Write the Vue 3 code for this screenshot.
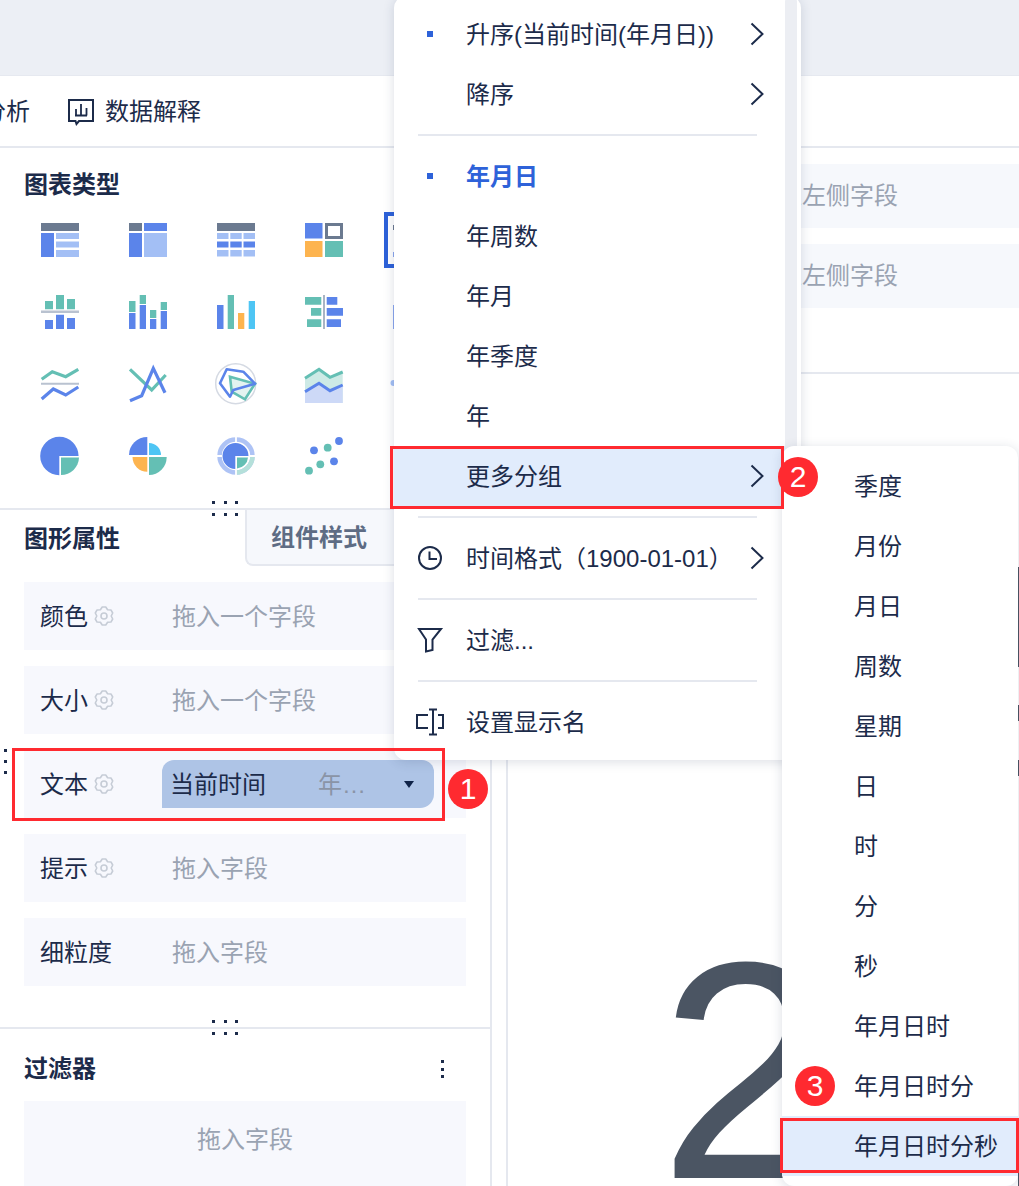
<script setup>
const mainMenu = [
  { type: 'item', label: '升序(当前时间(年月日))', bullet: true, arrow: true },
  { type: 'item', label: '降序', arrow: true },
  { type: 'line' },
  { type: 'item', label: '年月日', bullet: true, active: true },
  { type: 'item', label: '年周数' },
  { type: 'item', label: '年月' },
  { type: 'item', label: '年季度' },
  { type: 'item', label: '年' },
  { type: 'item', label: '更多分组', arrow: true, hover: true },
  { type: 'line' },
  { type: 'item', label: '时间格式（1900-01-01）', icon: 'clock', arrow: true },
  { type: 'line' },
  { type: 'item', label: '过滤...', icon: 'filter' },
  { type: 'line' },
  { type: 'item', label: '设置显示名', icon: 'rename' }
]
const subMenu = ['季度', '月份', '月日', '周数', '星期', '日', '时', '分', '秒', '年月日时', '年月日时分', '年月日时分秒']
const attrRows = [
  { label: '颜色', gear: true, hint: '拖入一个字段' },
  { label: '大小', gear: true, hint: '拖入一个字段' },
  { label: '文本', gear: true, pill: true },
  { label: '提示', gear: true, hint: '拖入字段' },
  { label: '细粒度', hint: '拖入字段' }
]
// bits of the big value that stick out right of the submenu
const peeks = [
  { top: 567, height: 100 },
  { top: 705, height: 16 },
  { top: 760, height: 16 },
  { top: 1172, height: 14 }
]

// six lobes with shallow notches between them
function gearPath() {
  const pts = []
  for (let i = 0; i < 6; i++) {
    const a = -90 + i * 60
    for (const [d, r] of [[-11, 9.2], [11, 9.2], [30, 7.2]]) {
      const t = ((a + d) * Math.PI) / 180
      pts.push(`${(10 + r * Math.cos(t)).toFixed(2)} ${(10 + r * Math.sin(t)).toFixed(2)}`)
    }
  }
  return 'M' + pts.join('L') + 'Z'
}
const gear = gearPath()
</script>

<template>
  <div class="page">
    <div class="topbar"></div>
    <div class="toolbar">
      <span class="tool-cut">分析</span>
      <svg class="tool-icon" width="28" height="28" viewBox="0 0 28 28" fill="none" stroke="#1c2b4a" stroke-width="2">
        <path d="M2 2h24v21H12l-2.500 3-1-3H2z" />
        <path d="M8 17.500h12M9 11v6.500M14 6v11.500M19.500 10v7.500" stroke-width="1.800" />
      </svg>
      <span class="tool-text">数据解释</span>
    </div>

    <div class="body">
      <div class="left">
        <section class="charts">
          <h3 class="title">图表类型</h3>
          <div class="chart-grid">
            <svg viewBox="0 0 38 34"><rect width="38" height="8" fill="#6b7a90" /><rect y="10" width="13" height="24" fill="#5b84ea" /><rect x="15" y="10" width="23" height="6" fill="#a3bff5" /><rect x="15" y="18.500" width="23" height="6" fill="#a3bff5" /><rect x="15" y="27" width="23" height="7" fill="#a3bff5" /></svg>
            <svg viewBox="0 0 38 34"><rect width="13" height="8" fill="#6b7a90" /><rect x="15" width="23" height="8" fill="#5b84ea" /><rect y="10" width="13" height="24" fill="#5b84ea" /><rect x="15" y="10" width="23" height="24" fill="#a3bff5" /></svg>
            <svg viewBox="0 0 38 34"><rect width="38" height="8" fill="#6b7a90" /><path fill="#a3bff5" d="M0 10h11.500v6H0zM13.300 10h11.400v6H13.300zM26.500 10H38v6H26.500zM0 27h11.500v6.500H0zM13.300 27h11.400v6.500H13.300zM26.500 27H38v6.500H26.500z" /><path fill="#5b84ea" d="M0 18.500h11.500v6H0zM13.300 18.500h11.400v6H13.300zM26.500 18.500H38v6H26.500z" /></svg>
            <svg viewBox="0 0 38 34"><rect width="17.500" height="15.500" fill="#5b84ea" /><rect x="21.500" y="1.500" width="15" height="13" fill="none" stroke="#6b7a90" stroke-width="3" /><rect y="18" width="17.500" height="16" fill="#fdb44f" /><rect x="20" y="18" width="18" height="16" fill="#64bfb4" /></svg>
            <svg viewBox="0 0 38 34"><rect y="2" width="38" height="5" fill="#6b7a90" /><rect y="29" width="38" height="5" fill="#8ba7ee" /><rect x="-7" y="-9" width="60" height="52" fill="none" stroke="#2e62d9" stroke-width="4" /></svg>

            <svg viewBox="0 0 38 34"><rect y="15.500" width="38" height="2.500" fill="#b9c2d0" /><path fill="#64bfb4" d="M4 6h8v8.300H4zM15 0h8v14.300h-8zM26 4h8v10.300h-8z" /><path fill="#5b84ea" d="M4 25h8v9H4zM15 19.700h8V34h-8zM26 23h8v11h-8z" /></svg>
            <svg viewBox="0 0 38 34"><path fill="#5b84ea" d="M0 18h6.500v16H0zM10.700 10H17v24h-6.300zM21 24h6.300v10H21zM31.700 16H38v18h-6.300z" /><path fill="#64bfb4" d="M0 6h6.500v11H0zM10.700 0H17v9h-6.300zM21 15h6.300v8H21zM31.700 7H38v8h-6.300z" /></svg>
            <svg viewBox="0 0 38 34"><rect y="10" width="6.500" height="24" fill="#5b84ea" /><rect x="10.700" width="6.300" height="34" fill="#64bfb4" /><rect x="21" y="18" width="6.300" height="16" fill="#fdb44f" /><rect x="31.700" y="6" width="6.300" height="28" fill="#4ec5f4" /></svg>
            <svg viewBox="0 0 38 34"><rect x="18" width="2" height="34" fill="#a9b4c4" /><path fill="#64bfb4" d="M0 2h16.300v7.700H0zM6 13h10.300v7.700H6zM2 24.300h14.300V32H2z" /><path fill="#5b84ea" d="M21.700 2h10.600v7.700H21.700zM21.700 13H38v7.700H21.700zM21.700 24.300H36V32H21.700z" /></svg>
            <svg viewBox="0 0 38 34"><rect y="10" width="38" height="24" fill="#8ba7ee" /></svg>

            <svg viewBox="0 0 38 34" fill="none" stroke-width="3.200"><path d="M.7 12.300l10.600-7.600 13.400 5 12.600-7.400" stroke="#64bfb4" /><path d="M0 16.700h38" stroke="#b9c2d0" stroke-width="2" /><path d="M.7 32l11.600-10 12.400 6 12.600-8" stroke="#5b84ea" /></svg>
            <svg viewBox="0 0 38 34" fill="none" stroke-width="3.200"><path d="M1 2.300L22.700 23 36.700 8" stroke="#64bfb4" /><path d="M1 33.700l11.700-5L24.300 1.300 36 25.700" stroke="#5b84ea" /></svg>
            <svg viewBox="0 0 38 34" fill="none"><circle cx="18.700" cy="16.700" r="20" stroke="#d5dae3" stroke-width="1.500" /><path d="M13 9.700l25 7-10 15.600-13.300-7.600z" fill="#e3f3f0" stroke="#64bfb4" stroke-width="2.600" /><path d="M9.700 2.300l16.600 2.400L38 16.700 16.300 23 13 29.700 3 16.300z" stroke="#5b84ea" stroke-width="2.600" stroke-linejoin="round" /></svg>
            <svg viewBox="0 0 38 34"><path fill="#cdeae6" d="M0 11.300L14 2.300l11 8 12.700-5.300V36H0z" /><path fill="#cdd9f7" d="M0 24.700l14-8.400 11 7.400L37.700 18V36H0z" /><path fill="none" stroke="#64bfb4" stroke-width="3" d="M0 11.300L14 2.300l11 8 12.700-5.300" /><path fill="none" stroke="#5b84ea" stroke-width="3" d="M0 24.700l14-8.400 11 7.400L37.700 18" /></svg>
            <svg viewBox="0 0 38 34"><circle cx="0.500" cy="16" r="3" fill="#a3bff5" /></svg>

            <svg viewBox="0 0 38 34"><path fill="#5b84ea" d="M18.300 17H37.600A19.200 19.200 0 1 0 18.300 36.200Z" /><path fill="#64bfb4" d="M20 18.500H38A18 18 0 0 1 20 36Z" /></svg>
            <svg viewBox="0 0 38 34"><path fill="#5b84ea" d="M18.300 16V-2A18.300 18 0 0 0 0 16Z" /><path fill="#4ec5f4" d="M20 16V4A12 12 0 0 1 32 16Z" /><path fill="#fdb44f" d="M18.300 18H3.500A14.800 14.800 0 0 0 18.300 32.700Z" /><path fill="#64bfb4" d="M20 18H37.700A17.700 18 0 0 1 20 36Z" /></svg>
            <svg viewBox="0 0 38 34"><circle cx="19" cy="17" r="16.500" fill="none" stroke="#aec3f5" stroke-width="4.500" /><path d="M19 33.500A16.500 16.500 0 0 0 35.500 17" fill="none" stroke="#b5e0da" stroke-width="4.500" /><path d="M19-3v40M-1 17h40" stroke="#fff" stroke-width="1.800" /><path fill="#5b84ea" d="M18.300 17H31.500A13 13 0 1 0 18.300 30Z" /><path fill="#64bfb4" d="M20 18.500H31A12 12 0 0 1 20 29.500Z" /></svg>
            <svg viewBox="0 0 38 34"><circle cx="34" cy="2" r="3.900" fill="#5b84ea" /><circle cx="22.700" cy="8.700" r="3.900" fill="#64bfb4" /><circle cx="9" cy="11.300" r="3.900" fill="#5b84ea" /><circle cx="29" cy="22.300" r="3.900" fill="#5b84ea" /><circle cx="15.300" cy="25.300" r="3.900" fill="#64bfb4" /><circle cx="4" cy="31.700" r="3.900" fill="#64bfb4" /></svg>
          </div>
        </section>

        <div class="splitter"><div class="dots"><i v-for="n in 6" :key="n"></i></div></div>

        <div class="tabs">
          <div class="tab"><span class="title">图形属性</span></div>
          <div class="tab tab-off"><span>组件样式</span></div>
        </div>

        <div class="attr-rows">
          <div v-for="row in attrRows" :key="row.label" class="attr-row">
            <div class="attr-label">
              <span class="txt">{{ row.label }}</span>
              <svg v-if="row.gear" class="gear" width="20" height="20" viewBox="0 0 20 20" fill="none" stroke="#c6ccd6" stroke-width="1.600" stroke-linejoin="round">
                <path :d="gear" /><circle cx="10" cy="10" r="3" />
              </svg>
            </div>
            <div v-if="row.pill" class="pill">
              <span class="pill-name txt">当前时间</span>
              <span class="pill-sub txt">年…</span>
              <i class="caret"></i>
            </div>
            <span v-else class="hint txt">{{ row.hint }}</span>
          </div>
        </div>

        <div class="splitter second"><div class="dots"><i v-for="n in 6" :key="n"></i></div></div>

        <div class="filter-head">
          <h3 class="title">过滤器</h3>
          <div class="more"><i></i><i></i><i></i></div>
        </div>
        <div class="filter-drop">拖入字段</div>
      </div>

      <div class="gutter"></div>

      <div class="right">
        <div class="field">拖入左侧字段</div>
        <div class="field">拖入左侧字段</div>
        <div class="right-line"></div>
        <div class="big-value">2</div>
      </div>
    </div>

    <div
      v-for="p in peeks"
      :key="p.top"
      class="peek"
      :style="{ top: p.top + 'px', height: p.height + 'px' }"
    ></div>

    <!-- context menu -->
    <div class="menu">
      <div class="menu-list">
        <template v-for="(m, i) in mainMenu" :key="i">
          <div v-if="m.type === 'line'" class="menu-line"></div>
          <div v-else class="menu-item" :class="{ active: m.active, hover: m.hover }">
            <div class="lead">
              <i v-if="m.bullet" class="bullet"></i>
              <svg v-if="m.icon === 'clock'" width="28" height="28" viewBox="0 0 28 28" fill="none" stroke="#1c2b4a" stroke-width="2">
                <circle cx="14" cy="14" r="11" /><path d="M13.500 7.500V15H21" />
              </svg>
              <svg v-if="m.icon === 'filter'" width="28" height="28" viewBox="0 0 28 28" fill="none" stroke="#1c2b4a" stroke-width="2">
                <path d="M3 3h22l-8.500 10.500V24L10 25.500V13.500z" />
              </svg>
              <svg v-if="m.icon === 'rename'" width="30" height="30" viewBox="0 0 30 30" fill="none" stroke="#1c2b4a" stroke-width="2">
                <path d="M13 8H2v13h11M18 2v26M14 2.500h8M14 27.500h8M23 8h5v13h-5" />
              </svg>
            </div>
            <span class="txt">{{ m.label }}</span>
            <svg v-if="m.arrow" class="chev" width="14" height="24" viewBox="0 0 14 24" fill="none" stroke="#1c2b4a" stroke-width="2"><path d="M1.500 1.500L12.500 12 1.500 22.500" /></svg>
          </div>
        </template>
      </div>
      <div class="menu-track"></div>
    </div>

    <div class="submenu">
      <div v-for="(s, i) in subMenu" :key="s" class="sub-item" :class="{ hover: i === subMenu.length - 1 }">{{ s }}</div>
    </div>

    <!-- annotations drawn on the screenshot -->
    <div class="frame frame-1"></div>
    <div class="frame frame-2"></div>
    <div class="frame frame-3"></div>
    <div class="badge badge-1">1</div>
    <div class="badge badge-2">2</div>
    <div class="badge badge-3">3</div>
    <div class="side-dots"><i></i><i></i><i></i></div>
  </div>
</template>

<style scoped>
.page {
  position: relative;
  width: 1019px;
  height: 1186px;
  overflow: hidden;
  background: #fff;
  color: #1c2b4a;
  font-family: "Liberation Sans", "Noto Sans CJK SC", sans-serif;
  font-size: 24px;
  line-height: 36px;
}
.txt {
  padding-top: 1px;
}
.topbar {
  height: 75px;
  background: #eceff5;
  border-bottom: 1px solid #e6e9f0;
}
.toolbar {
  height: 70px;
  border-bottom: 2px solid #e5e8ef;
  display: flex;
  align-items: center;
}
.tool-cut {
  margin-left: -18px;
  width: 85px;
  flex: none;
  padding-top: 2px;
}
.tool-icon {
  flex: none;
  margin-right: 10px;
  margin-top: 2px;
}
.tool-text {
  padding-top: 2px;
}

.body {
  display: flex;
  height: 1038px;
}
.left {
  width: 490px;
  flex: none;
  border-right: 2px solid #e5e8ef;
}
.title {
  margin: 0;
  font-size: 24px;
  font-weight: 700;
  line-height: 36px;
}
.charts {
  height: 360px;
  padding: 19px 0 0 24px;
  box-sizing: border-box;
}
.chart-grid {
  margin: 20px 0 0 17px;
  display: grid;
  grid-template-columns: repeat(5, 38px);
  grid-auto-rows: 34px;
  column-gap: 50px;
  row-gap: 38px;
}
.chart-grid svg {
  width: 38px;
  height: 34px;
  overflow: visible;
  display: block;
}

.splitter {
  position: relative;
  height: 2px;
  background: #e5e8ef;
}
.dots {
  position: absolute;
  left: 212px;
  top: -7px;
  display: grid;
  grid-template-columns: repeat(3, 3px);
  grid-auto-rows: 3px;
  column-gap: 8.500px;
  row-gap: 9px;
}
.dots i,
.more i,
.side-dots i {
  display: block;
  width: 3px;
  height: 3px;
  background: #1c2b4a;
}

.tabs {
  display: flex;
  height: 56px;
}
.tab {
  display: flex;
  align-items: center;
  padding: 1px 0 0 24px;
  width: 221px;
  flex: none;
}
.tab-off {
  flex: 1;
  width: auto;
  background: #f6f8fc;
  border-left: 2px solid #e5e8ef;
  border-bottom: 2px solid #e5e8ef;
  border-bottom-left-radius: 8px;
  font-weight: 700;
  color: #5e6c84;
}

.attr-rows {
  display: flex;
  flex-direction: column;
  gap: 16px;
  margin: 16px 24px 0;
}
.attr-row {
  height: 68px;
  display: flex;
  align-items: center;
  padding-left: 16px;
  background: #f7f8fd;
}
.attr-label {
  width: 132px;
  flex: none;
  display: flex;
  align-items: center;
}
.gear {
  margin-left: 6px;
}
.hint {
  color: #9aa3b2;
}
.pill {
  margin-left: -10px;
  width: 272px;
  height: 48px;
  flex: none;
  display: flex;
  align-items: center;
  padding-left: 8px;
  box-sizing: border-box;
  background: #aec4e6;
  border-radius: 12px 12px 14px 0;
}
.pill-name {
  width: 148px;
  flex: none;
}
.pill-sub {
  width: 86px;
  flex: none;
  color: #8a94a6;
}
.caret {
  width: 0;
  height: 0;
  border-left: 5.500px solid transparent;
  border-right: 5.500px solid transparent;
  border-top: 7px solid #0f2348;
}

.second {
  margin-top: 41px;
}
.filter-head {
  display: flex;
  align-items: center;
  justify-content: space-between;
  height: 72px;
  box-sizing: border-box;
  padding: 8px 46px 0 24px;
}
.more {
  display: flex;
  flex-direction: column;
  gap: 4.500px;
}
.filter-drop {
  margin: 0 24px;
  height: 120px;
  padding-top: 21px;
  box-sizing: border-box;
  background: #f7f8fd;
  color: #9aa3b2;
  text-align: center;
}

.gutter {
  width: 14px;
  flex: none;
  border-right: 2px solid #e5e8ef;
}
.right {
  flex: 1;
  min-width: 0;
  padding-top: 16px;
  overflow: hidden;
}
.field {
  height: 64px;
  margin-bottom: 16px;
  padding-left: 246px;
  background: #f6f8fc;
  color: #9aa3b2;
  line-height: 64px;
}
.right-line {
  height: 2px;
  margin-top: 64px;
  background: #e5e8ef;
}
.big-value {
  margin: 542px 0 0 151px;
  font-size: 310px;
  line-height: 310px;
  color: #4b5563;
}
.peek {
  position: absolute;
  left: 1018px;
  width: 1px;
  background: #4b5563;
}

.menu {
  position: absolute;
  left: 394px;
  top: -4px;
  width: 407px;
  height: 764px;
  display: flex;
  background: #fff;
  border-radius: 12px;
  box-shadow: 0 2px 12px rgba(30, 50, 90, 0.16);
}
.menu-list {
  width: 391px;
  flex: none;
  padding: 8px 0;
  box-sizing: border-box;
}
.menu-track {
  width: 12px;
  height: 100%;
  background: #eceef3;
  border-radius: 6px;
}
.menu-item {
  position: relative;
  height: 60px;
  display: flex;
  align-items: center;
}
.menu-item.hover,
.sub-item.hover {
  background: #e1ecfc;
}
.menu-item.active {
  color: #2e62d9;
  font-weight: 700;
}
.lead {
  width: 72px;
  flex: none;
  display: flex;
  align-items: center;
  justify-content: center;
}
.bullet {
  width: 6px;
  height: 6px;
  background: #2e62d9;
}
.chev {
  position: absolute;
  right: 21px;
  top: 18px;
}
.menu-line {
  height: 2px;
  margin: 10px 28px 10px 24px;
  background: #e5e8ef;
}

.submenu {
  position: absolute;
  left: 782px;
  top: 446px;
  width: 236px;
  height: 740px;
  padding-top: 10px;
  box-sizing: border-box;
  background: #fff;
  border-radius: 12px;
  box-shadow: 0 2px 12px rgba(30, 50, 90, 0.16);
}
.sub-item {
  height: 60px;
  padding-left: 72px;
  line-height: 61px;
}

.frame {
  position: absolute;
  border: 3px solid #ff2a30;
  box-sizing: border-box;
}
.frame-1 {
  left: 12px;
  top: 748px;
  width: 433px;
  height: 73px;
}
.frame-2 {
  left: 390px;
  top: 446px;
  width: 394px;
  height: 63px;
}
.frame-3 {
  left: 780px;
  top: 1118px;
  width: 239px;
  height: 55px;
}
.badge {
  position: absolute;
  width: 40px;
  height: 40px;
  border-radius: 50%;
  background: #ff2a30;
  color: #fff;
  font-size: 30px;
  line-height: 40px;
  text-align: center;
}
.badge-1 {
  left: 448px;
  top: 769px;
}
.badge-2 {
  left: 778px;
  top: 457px;
}
.badge-3 {
  left: 795px;
  top: 1066px;
}
.side-dots {
  position: absolute;
  left: 4px;
  top: 749px;
  display: flex;
  flex-direction: column;
  gap: 8px;
}
</style>
